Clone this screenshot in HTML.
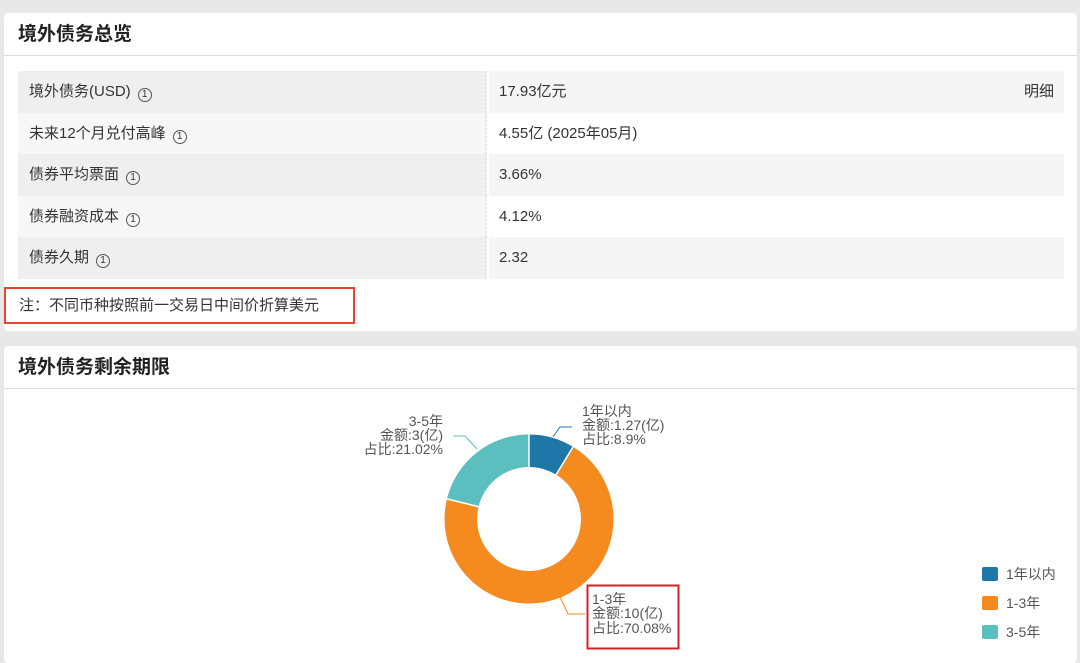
<!DOCTYPE html>
<html><head><meta charset="utf-8"><style>
*{margin:0;padding:0;box-sizing:border-box}
body{width:1080px;height:663px;background:#e8e8e8;font-family:"Liberation Sans","Noto Sans CJK SC",sans-serif;position:relative;overflow:hidden;color:#333}
.card{position:absolute;left:4px;width:1073px;background:#fff;border-radius:4px}
.h{height:43px;border-bottom:1px solid #ddd;padding-left:14px;font-size:19px;font-weight:bold;color:#222;line-height:44px}
.row{position:absolute;left:14px;width:1046px;height:41.5px;font-size:15px;line-height:41px}
.l{position:absolute;left:0;width:469px;height:100%;padding-left:11px;border-right:2px dotted #e6e6e6}
.v{position:absolute;left:471px;right:0;height:100%;padding-left:10px}
.o .l{background:#efefef}.o .v{background:#f5f5f5}
.e .l{background:#f7f7f7}.e .v{background:#fff}
.i{display:inline-block;width:14px;height:14px;border:1px solid #555;border-radius:50%;font-size:10px;line-height:12px;text-align:center;margin-left:7px;vertical-align:-1px}
svg text{font-family:"Liberation Sans","Noto Sans CJK SC",sans-serif;font-size:14px;fill:#555}
</style></head><body>
<div class="card" style="top:13px;height:318px">
<div class="h">境外债务总览</div>
<div class="row o" style="top:58px"><div class="l">境外债务(USD)<span class="i">1</span></div><div class="v">17.93亿元<span style="position:absolute;right:10px">明细</span></div></div>
<div class="row e" style="top:99.5px"><div class="l">未来12个月兑付高峰<span class="i">1</span></div><div class="v">4.55亿 (2025年05月)</div></div>
<div class="row o" style="top:141px"><div class="l">债券平均票面<span class="i">1</span></div><div class="v">3.66%</div></div>
<div class="row e" style="top:182.5px"><div class="l">债券融资成本<span class="i">1</span></div><div class="v">4.12%</div></div>
<div class="row o" style="top:224px"><div class="l">债券久期<span class="i">1</span></div><div class="v">2.32</div></div>
<div style="position:absolute;left:0;top:274px;width:351px;height:37px;border:2px solid #e8452c;font-size:15px;line-height:33px;padding-left:13px">注：不同币种按照前一交易日中间价折算美元</div>
</div>
<div class="card" style="top:346px;height:317px">
<div class="h">境外债务剩余期限</div>
</div>
<svg style="position:absolute;left:0;top:0" width="1080" height="663">
<g transform="rotate(-90 529 519)">
<circle cx="529" cy="519" r="68" fill="none" stroke="#1f77a8" stroke-width="33" stroke-dasharray="38.03 500"/>
<circle cx="529" cy="519" r="68" fill="none" stroke="#f58a1f" stroke-width="33" stroke-dasharray="0 38.03 299.4 500"/>
<circle cx="529" cy="519" r="68" fill="none" stroke="#5bbfbf" stroke-width="33" stroke-dasharray="0 337.43 89.8 500"/>
</g>
<g stroke="#fff" stroke-width="1.5"><line x1="529" y1="519" x2="529" y2="434"/><line x1="529" y1="519" x2="573" y2="447"/><line x1="529" y1="519" x2="447" y2="499"/></g>
<circle cx="529" cy="519" r="52" fill="#fff"/>
<polyline points="553,437 560,427 572,427" fill="none" stroke="#1f77a8"/>
<polyline points="477,449 465,436 453,436" fill="none" stroke="#5bbfbf"/>
<polyline points="560,597 568,614 585,614" fill="none" stroke="#f58a1f"/>
<text x="582" y="416">1年以内</text><text x="582" y="430">金额:1.27(亿)</text><text x="582" y="444">占比:8.9%</text>
<text x="443" y="426" text-anchor="end">3-5年</text><text x="443" y="440" text-anchor="end">金额:3(亿)</text><text x="443" y="454" text-anchor="end">占比:21.02%</text>
<text x="592" y="604">1-3年</text><text x="592" y="618">金额:10(亿)</text><text x="592" y="633">占比:70.08%</text>
<rect x="587.5" y="585.5" width="91" height="63" fill="none" stroke="#d2232a" stroke-width="2"/>
<rect x="982" y="567" width="16" height="14" rx="2" fill="#1f77a8"/><text x="1006" y="579">1年以内</text>
<rect x="982" y="596" width="16" height="14" rx="2" fill="#f58a1f"/><text x="1006" y="608">1-3年</text>
<rect x="982" y="625" width="16" height="14" rx="2" fill="#5bbfbf"/><text x="1006" y="637">3-5年</text>
</svg>
</body></html>
